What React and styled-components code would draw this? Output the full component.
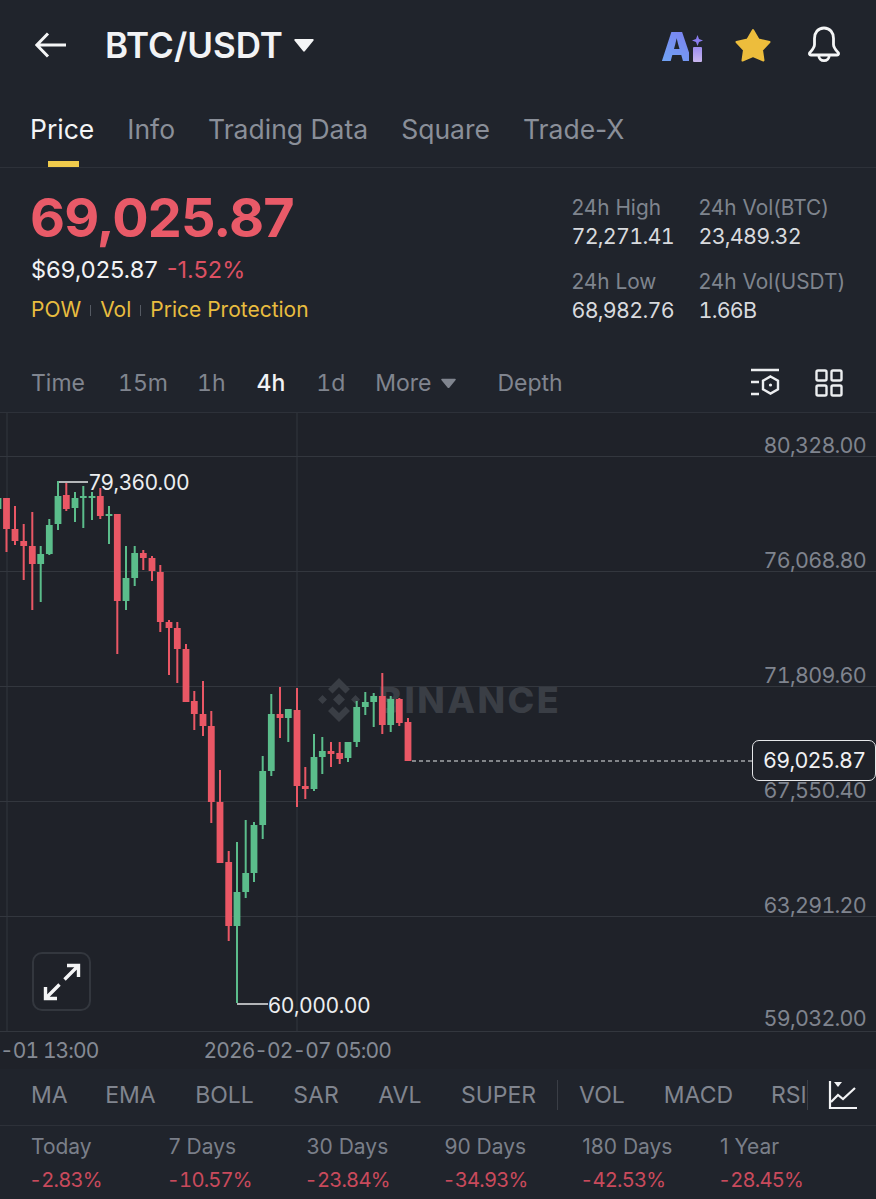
import React from "react";
import styled, { createGlobalStyle, css } from "styled-components";

const GlobalStyle = createGlobalStyle`
  html, body {
    margin: 0;
    padding: 0;
    background: #20242c;
  }
  * {
    box-sizing: border-box;
  }
`;

const RED = "#ea5765";
const GREEN = "#5bbd8b";

// x, wick top, wick bottom, body top, body bottom, up?
const CANDLES = [
  [-2, 495, 512, 499, 510, 1],
  [6.5, 499, 553, 499, 530, 0],
  [15, 507, 546, 530, 542, 0],
  [23.7, 525, 581, 542, 547, 0],
  [32.3, 513, 611, 547, 565, 0],
  [40.7, 547, 603, 555, 565, 1],
  [49.3, 520, 556, 526, 555, 1],
  [58, 482, 531, 497, 525, 1],
  [66.3, 484, 512, 496, 510, 0],
  [75, 493, 523, 499, 509, 1],
  [83.3, 487, 529, 497, 499, 1],
  [92, 493, 521, 497, 499, 1],
  [100.3, 489, 520, 497, 517, 0],
  [109, 507, 545, 515, 517, 1],
  [117.3, 515, 655, 515, 602, 0],
  [126, 547, 611, 579, 602, 1],
  [134.7, 547, 587, 554, 579, 1],
  [143.3, 551, 571, 554, 559, 0],
  [152, 557, 582, 559, 572, 0],
  [160.3, 566, 633, 573, 623, 0],
  [169, 621, 676, 623, 629, 0],
  [177.3, 623, 684, 629, 650, 0],
  [186, 645, 703, 650, 703, 0],
  [194.3, 692, 731, 702, 715, 0],
  [203, 682, 737, 715, 727, 0],
  [211.3, 712, 824, 727, 803, 0],
  [220, 771, 864, 803, 864, 0],
  [228.7, 852, 942, 863, 927, 0],
  [237, 843, 1004, 893, 927, 1],
  [245.7, 821, 899, 874, 893, 1],
  [254, 823, 883, 826, 874, 1],
  [262.7, 757, 840, 772, 826, 1],
  [271.3, 695, 777, 715, 772, 1],
  [280, 688, 739, 715, 719, 0],
  [288.3, 710, 743, 710, 719, 1],
  [297, 689, 808, 711, 787, 0],
  [305.3, 768, 800, 787, 790, 0],
  [314, 735, 792, 758, 790, 1],
  [322.3, 738, 775, 752, 758, 1],
  [331, 743, 768, 752, 755, 0],
  [339.7, 743, 765, 754, 760, 0],
  [348, 743, 763, 743, 759, 1],
  [356.7, 702, 748, 708, 743, 1],
  [365.3, 693, 716, 703, 708, 1],
  [373.7, 694, 728, 697, 703, 1],
  [382.3, 674, 735, 697, 726, 0],
  [390.7, 697, 733, 700, 726, 1],
  [399.3, 699, 727, 700, 724, 0],
  [408, 719, 762, 723, 762, 0],
];

const CHART_TOP = 414;

// the reference's digits all have one width, inter only does that with tnum
const numeric = css`
  font-variant-numeric: tabular-nums;
  letter-spacing: -0.75px;
`;

const Page = styled.div`
  width: 876px;
  height: 1199px;
  overflow: hidden;
  background: #20242c;
  color: #f2f3f5;
  font-family: Inter, "Open Sans", sans-serif;
`;

const Header = styled.header`
  display: flex;
  align-items: center;
  height: 90px;
  padding: 0 35px 0 35px;
`;

const Title = styled.h1`
  margin: 0 11px 0 38px;
  font-size: 35px;
  font-weight: 600;
  letter-spacing: 0;
`;

const HeaderIcons = styled.div`
  display: flex;
  align-items: center;
  gap: 32px;
  margin-left: auto;
`;

const AiMark = styled.span`
  position: relative;
  width: 42px;
  height: 42px;
`;

const AiLetter = styled.span`
  display: block;
  width: 28px;
  font-size: 40px;
  line-height: 46px;
  font-weight: 900;
  background: linear-gradient(35deg, #6eaaf5 0%, #7d7cef 100%);
  -webkit-background-clip: text;
  background-clip: text;
  color: transparent;
`;

const AiStem = styled.i`
  position: absolute;
  right: 1px;
  bottom: 4px;
  width: 9px;
  height: 15px;
  border-radius: 1px;
  background: linear-gradient(180deg, #9d8df0 0%, #c8b6ee 100%);
`;

const Sparkle = styled.svg`
  position: absolute;
  right: 0;
  top: 11px;
`;

const Tabs = styled.nav`
  display: flex;
  gap: 33px;
  height: 78px;
  padding: 21px 0 0 30px;
  border-bottom: 1px solid #2d3139;
`;

const Tab = styled.span`
  position: relative;
  font-size: 26.5px;
  line-height: 36px;
  color: ${p => (p.$active ? "#f4f5f6" : "#8a8f99")};

  &::after {
    content: "";
    display: ${p => (p.$active ? "block" : "none")};
    position: absolute;
    left: 18px;
    right: 15px;
    top: 50px;
    height: 6px;
    background: #f0cb4c;
  }
`;

const Summary = styled.section`
  display: flex;
  justify-content: space-between;
  height: 182px;
  padding: 20px 31px 0;
`;

const BigPrice = styled.div`
  margin-left: -1px;
  font-size: 54px;
  line-height: 60px;
  font-weight: 700;
  letter-spacing: -0.9px;
  color: #e95a68;
`;

const PriceLine = styled.div`
  display: flex;
  gap: 9px;
  margin-top: 7px;
  font-size: 23.5px;
  line-height: 30px;
`;

const Change = styled.span`
  color: #dc5062;
`;

const TagRow = styled.div`
  display: flex;
  align-items: center;
  gap: 9px;
  margin-top: 10px;
  font-size: 21px;
  line-height: 30px;
  color: #e9bd3f;
`;

const TagDivider = styled.i`
  width: 1px;
  height: 11px;
  background: #555a63;
`;

const StatGrid = styled.div`
  display: grid;
  grid-template-columns: 127px auto;
  grid-auto-rows: 74px;
  margin-top: 6px;
`;

const StatCell = styled.div`
  line-height: 28px;
`;

const StatLabel = styled.div`
  font-size: 20.8px;
  color: #7f848e;
`;

const StatValue = styled.div`
  ${numeric}
  font-size: 21.5px;
  color: #d8dade;
`;

const Intervals = styled.div`
  display: flex;
  align-items: center;
  height: 63px;
  padding: 4px 33px 0 31px;
  border-bottom: 1px solid #2d3139;
  font-size: 23px;
  font-variant-numeric: tabular-nums;
`;

const Interval = styled.span`
  margin-right: ${p => p.$gap}px;
  color: ${p => (p.$active ? "#f2f3f5" : "#80858f")};
  font-weight: ${p => (p.$active ? 500 : 400)};
`;

const IntervalIcons = styled.div`
  display: flex;
  align-items: center;
  gap: 35px;
  margin-left: auto;
`;

const Chart = styled.div`
  position: relative;
  height: 619px;
  overflow: hidden;
  background: #1f2229;
`;

const GridRow = styled.div`
  ${numeric}
  display: flex;
  align-items: flex-end;
  justify-content: flex-end;
  height: ${p => p.$height}px;
  padding: 0 10px ${p => p.$lift || 0}px 0;
  border-bottom: 1px solid #33373e;
  font-size: 21.5px;
  line-height: 22px;
  color: #7f848e;
`;

const CandleLayer = styled.svg`
  position: absolute;
  inset: 0;
`;

const Watermark = styled.div`
  position: absolute;
  left: 316px;
  top: 264px;
  display: flex;
  align-items: center;
  gap: 16px;
  font-size: 36px;
  line-height: 46px;
  font-weight: 800;
  letter-spacing: 2.5px;
  color: #3a3e45;
`;

const PeakLabel = styled.span`
  position: absolute;
  left: ${p => p.$x}px;
  top: ${p => p.$y}px;
  font-size: 21px;
  line-height: 28px;
  color: #eceef0;
`;

const PriceTag = styled.div`
  ${numeric}
  position: absolute;
  left: 752px;
  top: 327px;
  width: 124px;
  height: 41px;
  padding-left: 10px;
  border: 1px solid #e6e7e9;
  border-radius: 7px;
  background: #1f2229;
  font-size: 21.5px;
  line-height: 39px;
  color: #f0f1f3;
`;

const ExpandButton = styled.div`
  position: absolute;
  left: 32px;
  top: 539px;
  display: flex;
  align-items: center;
  justify-content: center;
  width: 59px;
  height: 59px;
  border: 2px solid #33373e;
  border-radius: 10px;
`;

const TimeAxis = styled.div`
  ${numeric}
  display: flex;
  align-items: center;
  gap: 105px;
  height: 37px;
  font-size: 21px;
  letter-spacing: -0.9px;
  color: #858a94;
  background: #1f2229;
`;

const Indicators = styled.div`
  display: flex;
  align-items: center;
  height: 57px;
  padding: 0 0 4px 31px;
  border-bottom: 1px solid #2d3139;
  font-size: 23px;
  color: #80858f;
`;

const Indicator = styled.span`
  margin-right: ${p => p.$gap}px;
`;

const IndicatorRule = styled.i`
  width: 1px;
  height: 30px;
  background: #3a3e46;
  margin-right: ${p => p.$gap}px;
`;

const Periods = styled.div`
  display: grid;
  grid-template-columns: repeat(6, 137.8px);
  padding: 4px 0 0 31px;
  line-height: 33px;
`;

const PeriodLabel = styled.div`
  font-size: 21px;
  color: #7a7f89;
`;

const PeriodValue = styled.div`
  ${numeric}
  margin-left: -2px;
  font-size: 20.2px;
  letter-spacing: -0.8px;
  color: #c94a5c;
`;

const Candle = ({ x, high, low, top, bottom, up }) => {
  const color = up ? GREEN : RED;
  return (
    <g fill={color}>
      <rect x={x - 1} y={high - CHART_TOP} width="2" height={low - high} />
      <rect x={x - 3.4} y={top - CHART_TOP} width="6.8" height={Math.max(bottom - top, 2)} />
    </g>
  );
};

const BackIcon = () => (
  <svg width="32" height="28" viewBox="0 0 32 28" fill="none" stroke="#f4f5f6" strokeWidth="3">
    <path d="M1 14h30M13 2.5 1.8 14 13 25.5" />
  </svg>
);

const Caret = ({ size, color }) => (
  <svg width={size} height={size * 0.72} viewBox="0 0 18 13" fill={color}>
    <path d="M1 1h16a.8.8 0 0 1 .6 1.3L9.7 12a1 1 0 0 1-1.4 0L.4 2.3A.8.8 0 0 1 1 1z" />
  </svg>
);

const StarIcon = () => (
  <svg width="40" height="36" viewBox="0 0 40 36" fill="#edbd3c" stroke="#edbd3c" strokeWidth="2" strokeLinejoin="round">
    <path d="M18 3l5.500 9.500 11 2.500-7.500 8 1.500 10.500-10.500-4.500-10.500 4.500 1.500-10.500-7.500-8 11-2.500z" />
  </svg>
);

const BellIcon = () => (
  <svg width="34" height="38" viewBox="0 0 34 38" fill="none" stroke="#f4f5f6" strokeWidth="2.8" strokeLinejoin="round">
    <path d="M17 2c-6 0-9.500 4.600-9.500 10.500v6c0 3.200-2 5.200-4.600 8-1 1.100-.4 2.500 1 2.500h26.200c1.400 0 2-1.400 1-2.500-2.600-2.800-4.600-4.800-4.600-8v-6C26.500 6.600 23 2 17 2z" />
    <path d="M11.800 29.500a5.200 5.200 0 0 0 10.400 0" />
  </svg>
);

const OrderIcon = () => (
  <svg width="30" height="30" viewBox="0 0 30 30" fill="none" stroke="#eceef0" strokeWidth="2.4">
    <path d="M1 2h28M1 14h8M1 26h8" />
    <path d="M20.500 8.500l7.500 4.300v8.400l-7.500 4.300-7.500-4.300v-8.400z" />
    <circle cx="20.500" cy="17" r="1.600" fill="#eceef0" stroke="none" />
  </svg>
);

const LayoutIcon = () => (
  <svg width="28" height="28" viewBox="0 0 28 28" fill="none" stroke="#eceef0" strokeWidth="2.4">
    <rect x="1.500" y="1.500" width="10" height="10" rx="1.500" />
    <rect x="16.500" y="1.500" width="10" height="10" rx="1.500" />
    <rect x="1.500" y="16.500" width="10" height="10" rx="1.500" />
    <rect x="16.500" y="16.500" width="10" height="10" rx="1.500" />
  </svg>
);

const ExpandIcon = () => (
  <svg width="40" height="40" viewBox="0 0 40 40" fill="none" stroke="#f4f5f6" strokeWidth="3.4">
    <path d="M22.500 17.500 36 4M25 3.500h11.500V15" />
    <path d="M17.500 22.500 4 36M15 36.500H3.500V25" />
  </svg>
);

const ChartToolIcon = () => (
  <svg width="30" height="30" viewBox="0 0 30 30" fill="none" stroke="#f2f3f5" strokeWidth="2.2">
    <path d="M2 1v27h27" />
    <path d="M3 22l7-7 5 4 12-11" />
    <path d="M6 2h8l-4 5z" fill="#f2f3f5" stroke="none" />
  </svg>
);

const BinanceMark = () => (
  <svg width="46" height="46" viewBox="0 0 46 46" fill="#3a3e45">
    <path d="M23 1 34 12l-4.500 4.500L23 10l-6.500 6.500L12 12z" />
    <path d="M23 45 12 34l4.500-4.500L23 36l6.500-6.500L34 34z" />
    <path d="M6.500 18 11 22.500 6.500 27 2 22.500zM39.500 18l4.500 4.500-4.500 4.500-4.500-4.500z" />
    <path d="M23 16.500l6 6-6 6-6-6z" />
  </svg>
);

const rows = [
  [44, "80,328.00"],
  [115, "76,068.80"],
  [115, "71,809.60"],
  [115, "67,550.40"],
  [115, "63,291.20"],
  [115, "59,032.00", 2],
];

const intervals = [
  ["Time", 33],
  ["15m", 29],
  ["1h", 31],
  ["4h", 31, true],
  ["1d", 30],
];

const indicators = [
  ["MA", 37.5],
  ["EMA", 39.5],
  ["BOLL", 39.5],
  ["SAR", 39.5],
  ["AVL", 39.5],
  ["SUPER", 21],
];

const App = () => (
  <Page>
    <GlobalStyle />
    <Header>
      <BackIcon />
      <Title>BTC/USDT</Title>
      <Caret size={20} color="#f4f5f6" />
      <HeaderIcons>
        <AiMark>
          <AiLetter>A</AiLetter>
          <AiStem />
          <Sparkle width="11" height="11" viewBox="0 0 11 11" fill="#8a7df0">
            <path d="M5.500 0 7 4l4 1.500L7 7l-1.500 4L4 7 0 5.500 4 4z" />
          </Sparkle>
        </AiMark>
        <StarIcon />
        <BellIcon />
      </HeaderIcons>
    </Header>

    <Tabs>
      <Tab $active>Price</Tab>
      <Tab>Info</Tab>
      <Tab>Trading Data</Tab>
      <Tab>Square</Tab>
      <Tab>Trade-X</Tab>
    </Tabs>

    <Summary>
      <div>
        <BigPrice>69,025.87</BigPrice>
        <PriceLine>
          <span>$69,025.87</span>
          <Change>-1.52%</Change>
        </PriceLine>
        <TagRow>
          <span>POW</span>
          <TagDivider />
          <span>Vol</span>
          <TagDivider />
          <span>Price Protection</span>
        </TagRow>
      </div>
      <StatGrid>
        <StatCell>
          <StatLabel>24h High</StatLabel>
          <StatValue>72,271.41</StatValue>
        </StatCell>
        <StatCell>
          <StatLabel>24h Vol(BTC)</StatLabel>
          <StatValue>23,489.32</StatValue>
        </StatCell>
        <StatCell>
          <StatLabel>24h Low</StatLabel>
          <StatValue>68,982.76</StatValue>
        </StatCell>
        <StatCell>
          <StatLabel>24h Vol(USDT)</StatLabel>
          <StatValue>1.66B</StatValue>
        </StatCell>
      </StatGrid>
    </Summary>

    <Intervals>
      {intervals.map(([label, gap, active]) => (
        <Interval key={label} $gap={gap} $active={active}>
          {label}
        </Interval>
      ))}
      <Interval $gap={9}>More</Interval>
      <Caret size={15} color="#80858f" />
      <Interval $gap={0} style={{ marginLeft: 42 }}>
        Depth
      </Interval>
      <IntervalIcons>
        <OrderIcon />
        <LayoutIcon />
      </IntervalIcons>
    </Intervals>

    <Chart>
      {rows.map(([height, label, lift]) => (
        <GridRow key={label} $height={height} $lift={lift}>
          {label}
        </GridRow>
      ))}
      <Watermark>
        <BinanceMark />
        BINANCE
      </Watermark>
      <CandleLayer width="876" height="619" viewBox="0 0 876 619">
        <path d="M7 0v619M297 0v619" stroke="#33373e" strokeWidth="1" />
        <path d="M58 69V83M58 69H88" stroke="#e6e7e9" strokeWidth="1.5" fill="none" />
        <path d="M237 591H268" stroke="#e6e7e9" strokeWidth="1.5" fill="none" />
        {CANDLES.map(([x, high, low, top, bottom, up]) => (
          <Candle key={x} x={x} high={high} low={low} top={top} bottom={bottom} up={up} />
        ))}
        <path d="M412 348H752" stroke="#e6e7e9" strokeWidth="1.2" strokeDasharray="4 3" />
      </CandleLayer>
      <PeakLabel $x={89} $y={56}>79,360.00</PeakLabel>
      <PeakLabel $x={268} $y={579}>60,000.00</PeakLabel>
      <PriceTag>69,025.87</PriceTag>
      <ExpandButton>
        <ExpandIcon />
      </ExpandButton>
    </Chart>

    <TimeAxis>
      <span>-01 13:00</span>
      <span>2026-02-07 05:00</span>
    </TimeAxis>

    <Indicators>
      {indicators.map(([label, gap]) => (
        <Indicator key={label} $gap={gap}>
          {label}
        </Indicator>
      ))}
      <IndicatorRule $gap={21} />
      <Indicator $gap={39}>VOL</Indicator>
      <Indicator $gap={38}>MACD</Indicator>
      <Indicator $gap={0}>RSI</Indicator>
      <IndicatorRule $gap={20} />
      <ChartToolIcon />
    </Indicators>

    <Periods>
      {[
        ["Today", "-2.83%"],
        ["7 Days", "-10.57%"],
        ["30 Days", "-23.84%"],
        ["90 Days", "-34.93%"],
        ["180 Days", "-42.53%"],
        ["1 Year", "-28.45%"],
      ].map(([label, value]) => (
        <div key={label}>
          <PeriodLabel>{label}</PeriodLabel>
          <PeriodValue>{value}</PeriodValue>
        </div>
      ))}
    </Periods>
  </Page>
);

export default App;
